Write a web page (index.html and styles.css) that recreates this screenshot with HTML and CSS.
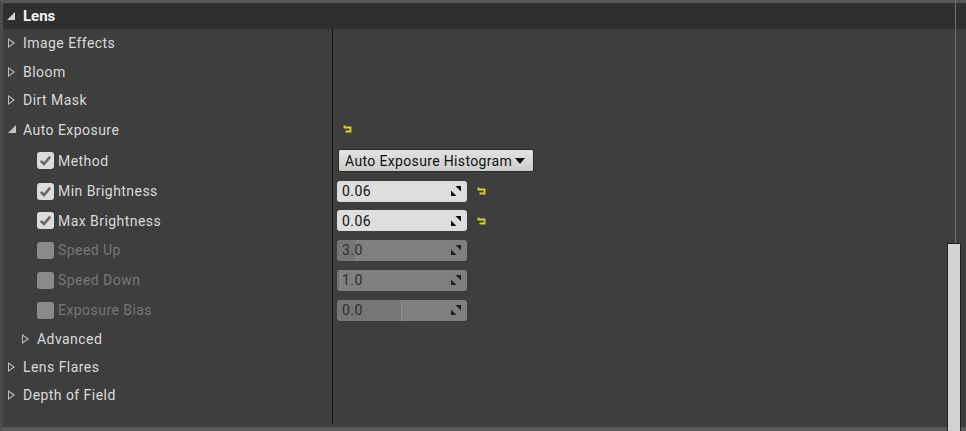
FILE: index.html
```html
<!DOCTYPE html>
<html>
<head>
<meta charset="utf-8">
<link rel="stylesheet" href="styles.css">
</head>
<body>
<div class="panel">
  <div class="header">
    <span class="tri-open hdr"></span><span class="title">Lens</span>
  </div>
  <div class="body">
    <div class="names">
      <div class="row cat h28"><span class="tri-closed"></span>Image Effects</div>
      <div class="row cat h29"><span class="tri-closed"></span>Bloom</div>
      <div class="row cat h28"><span class="tri-closed"></span>Dirt Mask</div>
      <div class="row cat h31"><span class="tri-open"></span>Auto Exposure</div>
      <div class="row prop h31"><span class="check on"><svg viewBox="0 0 17 17" width="17" height="17"><path d="M3.8 8.8 L7 12 L13.2 4.6" fill="none" stroke="#6a6a6a" stroke-width="2.6"/></svg></span>Method</div>
      <div class="row prop"><span class="check on"><svg viewBox="0 0 17 17" width="17" height="17"><path d="M3.8 8.8 L7 12 L13.2 4.6" fill="none" stroke="#6a6a6a" stroke-width="2.6"/></svg></span>Min Brightness</div>
      <div class="row prop h29"><span class="check on"><svg viewBox="0 0 17 17" width="17" height="17"><path d="M3.8 8.8 L7 12 L13.2 4.6" fill="none" stroke="#6a6a6a" stroke-width="2.6"/></svg></span>Max Brightness</div>
      <div class="row prop off"><span class="check"></span>Speed Up</div>
      <div class="row prop off"><span class="check"></span>Speed Down</div>
      <div class="row prop off"><span class="check"></span>Exposure Bias</div>
      <div class="row sub h27"><span class="tri-closed"></span>Advanced</div>
      <div class="row cat h29"><span class="tri-closed"></span>Lens Flares</div>
      <div class="row cat h28"><span class="tri-closed"></span>Depth of Field</div>
    </div>
    <div class="divider"></div>
    <div class="values">
      <div class="row h28"></div>
      <div class="row h29"></div>
      <div class="row h28"></div>
      <div class="row h31"><span class="reset first"><svg viewBox="0 0 9 8" width="9" height="8"><path d="M1.5 0.5 V2.5 H7.5 V6.5 H2.5" fill="none" stroke="#d4d42a" stroke-width="1.8"/></svg></span></div>
      <div class="row prop h31"><div class="dropdown">Auto Exposure Histogram<span class="caret"></span></div></div>
      <div class="row prop"><div class="num"><span class="val">0.06</span><svg class="spin" viewBox="0 0 12 12" width="12" height="12"><path d="M5.5 1 H11 V6.5 Z M1 5.5 V11 H6.5 Z" fill="#111"/></svg></div><span class="reset"><svg viewBox="0 0 9 8" width="9" height="8"><path d="M1.5 0.5 V2.5 H7.5 V6.5 H2.5" fill="none" stroke="#d4d42a" stroke-width="1.8"/></svg></span></div>
      <div class="row prop h29"><div class="num"><span class="val">0.06</span><svg class="spin" viewBox="0 0 12 12" width="12" height="12"><path d="M5.5 1 H11 V6.5 Z M1 5.5 V11 H6.5 Z" fill="#111"/></svg></div><span class="reset"><svg viewBox="0 0 9 8" width="9" height="8"><path d="M1.5 0.5 V2.5 H7.5 V6.5 H2.5" fill="none" stroke="#d4d42a" stroke-width="1.8"/></svg></span></div>
      <div class="row prop"><div class="num dis"><div class="fill" style="width:20px"></div><span class="val">3.0</span><svg class="spin" viewBox="0 0 12 12" width="12" height="12"><path d="M5.5 1 H11 V6.5 Z M1 5.5 V11 H6.5 Z" fill="#222"/></svg></div></div>
      <div class="row prop"><div class="num dis"><div class="fill" style="width:4px"></div><span class="val">1.0</span><svg class="spin" viewBox="0 0 12 12" width="12" height="12"><path d="M5.5 1 H11 V6.5 Z M1 5.5 V11 H6.5 Z" fill="#222"/></svg></div></div>
      <div class="row prop"><div class="num dis"><div class="fill" style="width:65px"></div><span class="val">0.0</span><svg class="spin" viewBox="0 0 12 12" width="12" height="12"><path d="M5.5 1 H11 V6.5 Z M1 5.5 V11 H6.5 Z" fill="#222"/></svg></div></div>
    </div>
  </div>
  <div class="track"></div>
  <div class="thumb"></div>
</div>
</body>
</html>
```
FILE: styles.css
```css
* { box-sizing: border-box; }
html, body {
  margin: 0;
  padding: 0;
  background: #3e3e3e;
  width: 966px;
  height: 431px;
  overflow: hidden;
}
.panel {
  position: relative;
  width: 966px;
  height: 431px;
  border-top: 3px solid #575757;
  border-left: 3px solid #4b4b4b;
  border-bottom: 4px solid #5a5a5a;
  background: #3e3e3e;
  font-family: Roboto, "Liberation Sans", sans-serif;
  font-size: 14px;
  color: #dadada;
  letter-spacing: 0.45px;
}
.header {
  height: 26px;
  background: #2f2f2f;
  display: flex;
  align-items: center;
  padding-left: 4px;
}
.title {
  font-weight: bold;
  font-size: 15px;
  color: #f2f2f2;
  letter-spacing: 0;
}
.body {
  display: flex;
  height: 395px;
}
.names { width: 329px; }
.divider {
  width: 1px;
  background: #141414;
}
.values {
  flex: 1;
  padding-left: 4px;
}
.row {
  display: flex;
  align-items: center;
  height: 30px;
  white-space: nowrap;
}
.h27 { height: 27px; }
.h28 { height: 28px; }
.h29 { height: 29px; }
.h31 { height: 31px; }
.cat { padding-left: 5px; }
.sub { padding-left: 19px; }
.prop { padding-left: 34px; }
.values .prop { padding-left: 0; }
.prop.off { color: #777777; }

.tri-closed {
  width: 0; height: 0;
  border-top: 5px solid transparent;
  border-bottom: 5px solid transparent;
  border-left: 7px solid #bdbdbd;
  position: relative;
  margin-right: 8px;
}
.tri-closed::after {
  content: "";
  position: absolute;
  left: -6px; top: -3px;
  width: 0; height: 0;
  border-top: 3px solid transparent;
  border-bottom: 3px solid transparent;
  border-left: 4px solid #3e3e3e;
}
.tri-open {
  width: 0; height: 0;
  border-left: 8px solid transparent;
  border-bottom: 8px solid #c4c4c4;
  margin-right: 7px;
  margin-top: -1px;
}
.tri-open.hdr { border-bottom-color: #d0d0d0; margin-right: 8px; }

.check {
  width: 17px; height: 17px;
  border-radius: 3px;
  background: #8a8a8a;
  margin-right: 4px;
  display: flex;
}
.check.on { background: #dcdcdc; }

.reset { display: flex; margin-left: 10px; }
.reset.first { margin-left: 6px; margin-top: -1px; }

.dropdown {
  margin-left: 1px;
  width: 196px;
  height: 23px;
  background: linear-gradient(#e2e2e2, #cdcdcd);
  border: 1px solid #2a2a2a;
  border-radius: 2px;
  color: #111;
  display: flex;
  align-items: center;
  padding-left: 6px;
  font-size: 14px;
  letter-spacing: 0.35px;
}
.caret {
  width: 0; height: 0;
  border-left: 5px solid transparent;
  border-right: 5px solid transparent;
  border-top: 6px solid #111;
  margin-left: 3px;
}
.num {
  position: relative;
  width: 130px;
  height: 21px;
  background: #dedede;
  border-radius: 3px;
  display: flex;
  align-items: center;
  padding-left: 5px;
  color: #121212;
  font-size: 14px;
  overflow: hidden;
}
.num.dis {
  background: #7f7f7f;
  color: #2e2e2e;
}
.fill {
  position: absolute;
  left: 0; top: 0; bottom: 0;
  background: #767676;
  border-right: 1px solid #8d8d8d;
  border-radius: 3px 0 0 3px;
}
.val { position: relative; flex: 1; }
.spin { position: relative; margin-right: 5px; }

.track {
  position: absolute;
  left: 952px;
  top: -3px;
  width: 1px;
  height: 246px;
  background: #6e6e6e;
}
.thumb {
  position: absolute;
  left: 944px;
  top: 240px;
  width: 14px;
  height: 200px;
  background: #d2d2d2;
  border: 1px solid #1e1e1e;
}
```
